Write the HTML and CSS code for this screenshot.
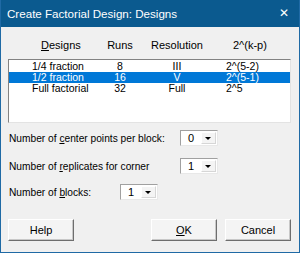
FILE: index.html
```html
<!DOCTYPE html>
<html lang="en">
<head>
    <meta charset="UTF-8">
    <title>Create Factorial Design: Designs</title>
    <link rel="stylesheet" href="styles.css">
</head>
<body>
<div class="window">
    <div class="titlebar">
        <span class="title">Create Factorial Design: Designs</span>
        <span class="close">&#x2715;</span>
    </div>
    <div class="content">
        <div class="grid head">
            <span class="c1"><u>D</u>esigns</span>
            <span class="c2">Runs</span>
            <span class="c3">Resolution</span>
            <span class="c4">2^(k-p)</span>
        </div>
        <div class="listbox">
            <div class="grid row">
                <span class="c1">1/4 fraction</span><span class="c2">8</span><span class="c3">III</span><span class="c4">2^(5-2)</span>
            </div>
            <div class="grid row selected">
                <span class="c1">1/2 fraction</span><span class="c2">16</span><span class="c3">V</span><span class="c4">2^(5-1)</span>
            </div>
            <div class="grid row">
                <span class="c1">Full factorial</span><span class="c2">32</span><span class="c3">Full</span><span class="c4">2^5</span>
            </div>
        </div>

        <div class="option first">
            <span class="label">Number of <u>c</u>enter points per block:</span>
            <div class="combo"><span class="value">0</span><span class="arrow"></span></div>
        </div>
        <div class="option second">
            <span class="label">Number of <u>r</u>eplicates for corner</span>
            <div class="combo"><span class="value">1</span><span class="arrow"></span></div>
        </div>
        <div class="option third">
            <span class="label short">Number of <u>b</u>locks:</span>
            <div class="combo"><span class="value">1</span><span class="arrow"></span></div>
        </div>

        <div class="buttons">
            <button class="btn">Help</button>
            <span class="spacer"></span>
            <button class="btn"><u>O</u>K</button>
            <button class="btn">Cancel</button>
        </div>
    </div>
</div>
</body>
</html>
```

FILE: styles.css
```css
body {
    margin: 0;
    padding: 0;
    font-family: "Liberation Sans", Arial, sans-serif;
    font-size: 11px;
    line-height: 13px;
    color: #000;
    background-color: #f0f0f0;
}
.window {
    width: 300px;
    height: 253px;
    box-sizing: border-box;
    border: 1px solid #1f6aa5;
    border-top: none;
    background-color: #f0f0f0;
    overflow: hidden;
}
.titlebar {
    height: 27px;
    margin: 0 -1px;
    padding: 0 8px 0 7px;
    display: flex;
    align-items: center;
    justify-content: space-between;
    background-color: #0b5a8f;
    color: #fff;
}
.title {
    font-size: 11.6px;
    white-space: nowrap;
}
.close {
    font-family: "DejaVu Sans", sans-serif;
    font-size: 12px;
    margin-right: 3px;
}
.content {
    padding: 0 8px 0 7px;
}
.grid {
    display: grid;
    align-items: center;
    white-space: nowrap;
}
.head {
    grid-template-columns: 91px 40px 74px 1fr;
    height: 14px;
    margin-top: 11px;
    padding-left: 1px;
}
.head .c1 {
    padding-left: 32px;
}
.head .c4 {
    padding-left: 19px;
}
.c2, .c3 {
    text-align: center;
}
.row {
    grid-template-columns: 68px 40px 74px 1fr;
    padding-left: 23px;
    height: 11px;
    line-height: 11px;
    font-size: 10.5px;
}
.row .c4 {
    padding-left: 12px;
}
.listbox {
    margin-top: 7px;
    height: 64px;
    box-sizing: border-box;
    border: 1px solid #828282;
    border-right-color: #e3e3e3;
    border-bottom-color: #e3e3e3;
    background-color: #fff;
    padding-top: 1px;
}
.selected {
    background-color: #0078d7;
    color: #fff;
}
.option {
    display: flex;
    align-items: center;
    height: 16px;
    padding-left: 1px;
    white-space: nowrap;
}
.option.first {
    margin-top: 7px;
}
.option.second {
    margin-top: 12px;
}
.option.third {
    margin-top: 10px;
}
.label {
    width: 171px;
    font-size: 10.2px;
}
.label.short {
    width: 111px;
}
.combo {
    display: flex;
    align-items: center;
    width: 38px;
    height: 16px;
    box-sizing: border-box;
    border: 1px solid #a0a0a0;
    border-right-color: #e8e8e8;
    border-bottom-color: #e8e8e8;
    background-color: #fff;
}
.value {
    flex: 1;
    padding-left: 7px;
}
.arrow {
    width: 15px;
    height: 12px;
    box-sizing: border-box;
    margin-right: 1px;
    border: 1px solid #d6d6d6;
    border-top-color: #fff;
    border-left-color: #fff;
    background-color: #f4f4f4;
    position: relative;
}
.arrow::after {
    content: "";
    position: absolute;
    left: 3px;
    top: 4px;
    border-left: 3px solid transparent;
    border-right: 3px solid transparent;
    border-top: 3px solid #000;
}
.buttons {
    display: flex;
    gap: 8px;
    margin-top: 19px;
}
.spacer {
    flex: 1;
}
.btn {
    width: 66px;
    height: 22px;
    padding: 0;
    font-family: inherit;
    font-size: 11px;
    color: #000;
    background-color: #f4f4f4;
    border: 1px solid #fff;
    border-right-color: #6e6e6e;
    border-bottom-color: #6e6e6e;
    box-shadow: inset -1px -1px 0 #c8c8c8;
}
```
